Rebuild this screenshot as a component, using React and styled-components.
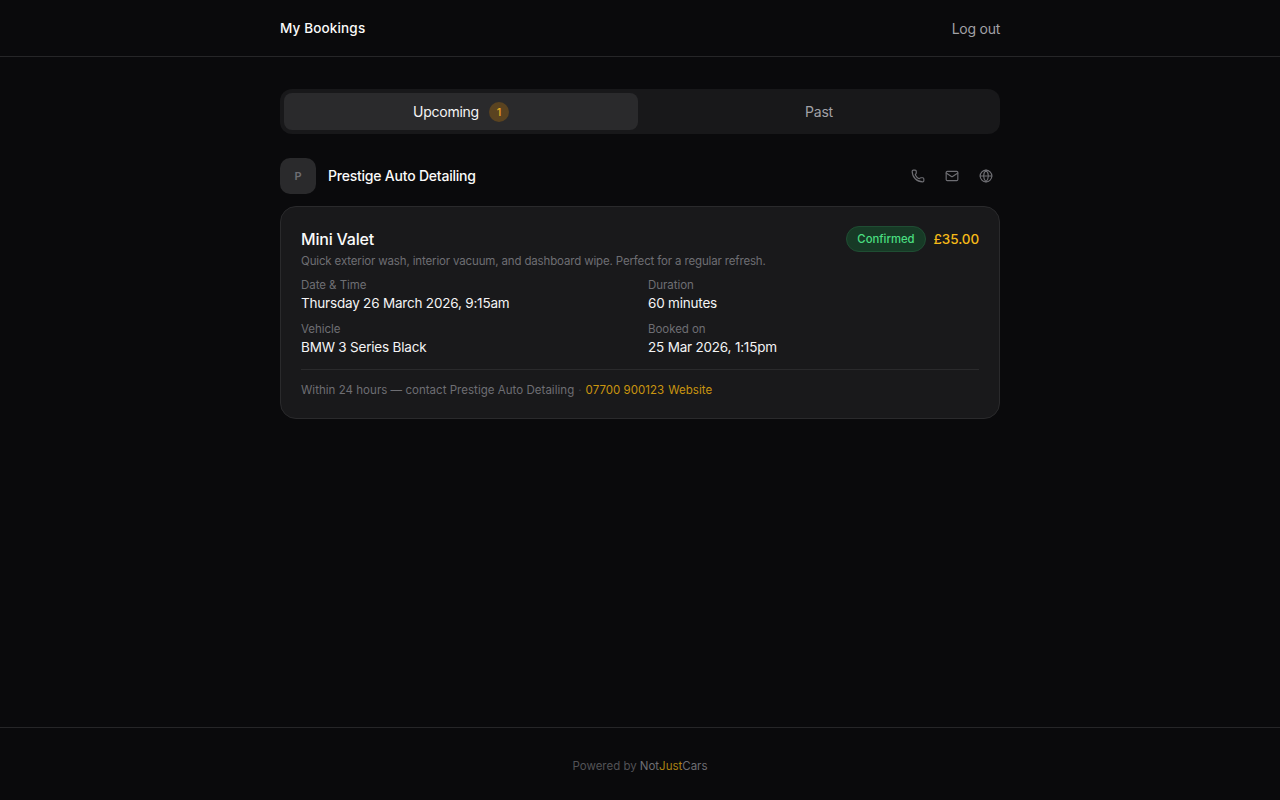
import React from "react";
import styled, { createGlobalStyle } from "styled-components";
import { Phone, Mail, Globe } from "lucide-react";

const Global = createGlobalStyle`
  html, body { margin: 0; padding: 0; background: #0a0a0c; }
  body { font-family: Inter, "Noto Sans", sans-serif; -webkit-font-smoothing: antialiased; }
  * { box-sizing: border-box; }
`;
const Page = styled.div`
  min-height: 800px; display: flex; flex-direction: column; background: #0a0a0c; color: #f4f4f5;
`;
const Header = styled.header`
  height: 57px; border-bottom: 1px solid #262628; display: flex; justify-content: center;
`;
const Bar = styled.div`
  width: 720px; display: flex; align-items: center; justify-content: space-between;
`;
const Title = styled.h1`
  margin: 0 0 1px; font-size: 13.5px; font-weight: 500; color: #fafafa; letter-spacing: 0.15px;
`;
const Logout = styled.button`
  background: none; border: 0; padding: 0; font: inherit; font-size: 14px; color: #a1a1a6; letter-spacing: -0.25px;
`;
const Main = styled.main`
  flex: 1; width: 720px; margin: 0 auto; padding-top: 32px;
`;
const Tabs = styled.div`
  height: 45px; padding: 4px; border-radius: 12px; background: #18181a; display: grid; grid-template-columns: 1fr 1fr; gap: 4px; margin-bottom: 24px;
`;
const Tab = styled.button`
  border: 0; border-radius: 8px; font: inherit; font-size: 14px; letter-spacing: -0.25px;
  background: ${p => (p.$active ? "#2a2a2c" : "transparent")};
  color: ${p => (p.$active ? "#f4f4f5" : "#a1a1a6")};
  display: flex; align-items: center; justify-content: center; gap: 10px; font-weight: 400;
`;
const Count = styled.span`
  width: 20px; height: 20px; border-radius: 50%; background: #5a4320; color: #e5a823; font-size: 11px; font-weight: 500;
  display: flex; align-items: center; justify-content: center;
`;
const Business = styled.div`
  display: flex; align-items: center; justify-content: space-between; margin-bottom: 12px;
`;
const Who = styled.div`
  display: flex; align-items: center; gap: 12px;
`;
const Avatar = styled.div`
  width: 36px; height: 36px; border-radius: 10px; background: #2a2a2c; color: #6e6e73; font-size: 11px; font-weight: 600;
  display: flex; align-items: center; justify-content: center;
`;
const BizName = styled.span`
  font-size: 14px; font-weight: 500; color: #fafafa; letter-spacing: -0.22px; margin-bottom: 1px;
`;
const Contacts = styled.div`
  display: flex; align-items: center; gap: 6px;
`;
const IconBtn = styled.span`
  width: 28px; height: 28px; display: flex; align-items: center; justify-content: center; color: #6e6e73;
`;
const Card = styled.section`
  background: #19191b; border: 1px solid #2a2a2c; border-radius: 16px; padding: 20px;
`;
const CardTop = styled.div`
  display: flex; justify-content: space-between; align-items: center; height: 24px;
`;
const Service = styled.h2`
  margin: 0; font-size: 16px; font-weight: 500; color: #fafafa; letter-spacing: -0.2px;
`;
const Right = styled.div`
  display: flex; align-items: center; gap: 8px;
`;
const Badge = styled.span`
  height: 26px; padding: 0 10px; border-radius: 13px; background: #173a26; border: 1px solid #1f4d33; color: #4ade80; font-size: 11.3px; font-weight: 500;
  display: flex; align-items: center;
`;
const Price = styled.span`
  font-size: 13.5px; font-weight: 500; color: #f5b918; letter-spacing: -0.1px;
`;
const Desc = styled.p`
  margin: 2px 0 0; font-size: 11.5px; line-height: 16px; color: #6e6e73; letter-spacing: -0.15px;
`;
const Grid = styled.div`
  display: grid; grid-template-columns: 1fr 1fr; gap: 8px 16px; margin-top: 8px;
`;
const Label = styled.div`
  font-size: 11.5px; line-height: 16px; color: #6e6e73; letter-spacing: -0.05px;
`;
const Value = styled.div`
  font-size: 13.5px; line-height: 20px; color: #f4f4f5; letter-spacing: -0.2px;
`;
const Note = styled.div`
  margin-top: 12px; padding-top: 12px; border-top: 1px solid #2a2a2c; font-size: 11.5px; line-height: 16px; color: #6e6e73; display: flex; letter-spacing: 0.03px;
`;
const Dot = styled.span`
  margin: 0 4px; color: #3f3f46;
`;
const Lnk = styled.a`
  color: #c9950f; margin-right: 4px;
`;
const Footer = styled.footer`
  height: 73px; border-top: 1px solid #262628; padding-top: 4px; display: flex; align-items: center; justify-content: center; font-size: 11.5px; color: #525256;
`;
const Brand = styled.span`
  color: #6e6e73; margin-left: 3px;
`;
const Gold = styled.span`
  color: #a98212;
`;

export default function App() {
  return (
    <Page>
      <Global />
      <Header><Bar><Title>My Bookings</Title><Logout>Log out</Logout></Bar></Header>
      <Main>
        <Tabs>
          <Tab $active>Upcoming <Count>1</Count></Tab>
          <Tab>Past</Tab>
        </Tabs>
        <Business>
          <Who><Avatar>P</Avatar><BizName>Prestige Auto Detailing</BizName></Who>
          <Contacts>
            <IconBtn><Phone size={14} strokeWidth={2} /></IconBtn>
            <IconBtn><Mail size={14} strokeWidth={2} /></IconBtn>
            <IconBtn><Globe size={14} strokeWidth={2} /></IconBtn>
          </Contacts>
        </Business>
        <Card>
          <CardTop>
            <Service>Mini Valet</Service>
            <Right><Badge>Confirmed</Badge><Price>£35.00</Price></Right>
          </CardTop>
          <Desc>Quick exterior wash, interior vacuum, and dashboard wipe. Perfect for a regular refresh.</Desc>
          <Grid>
            <div><Label>Date &amp; Time</Label><Value>Thursday 26 March 2026, 9:15am</Value></div>
            <div><Label>Duration</Label><Value>60 minutes</Value></div>
            <div><Label>Vehicle</Label><Value>BMW 3 Series Black</Value></div>
            <div><Label>Booked on</Label><Value>25 Mar 2026, 1:15pm</Value></div>
          </Grid>
          <Note>Within 24 hours — contact Prestige Auto Detailing<Dot>·</Dot><Lnk>07700 900123</Lnk><Lnk>Website</Lnk></Note>
        </Card>
      </Main>
      <Footer>Powered by<Brand>Not<Gold>Just</Gold>Cars</Brand></Footer>
    </Page>
  );
}
